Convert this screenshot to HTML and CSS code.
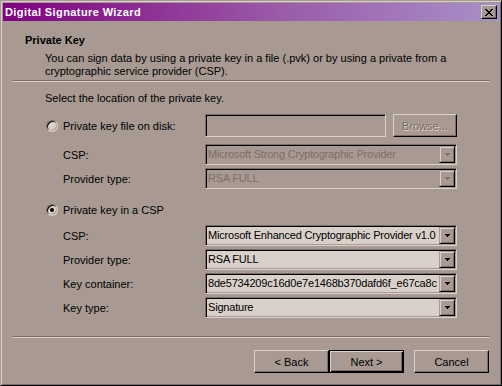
FILE: index.html
```html
<html lang="en">
  <head>
    <meta charset="UTF-8" />
    <title>Digital Signature Wizard</title>
    <link rel="stylesheet" href="styles.css">
  </head>
  <body>
    <div class="window">
      <div class="titlebar">
        <span class="title">Digital Signature Wizard</span>
        <span class="close">
          <svg width="8" height="7" viewBox="0 0 8 7" shape-rendering="crispEdges">
            <path d="M0 0h2v1H0zM6 0h2v1H6zM1 1h2v1H1zM5 1h2v1H5zM2 2h4v1H2zM3 3h2v1H3zM2 4h4v1H2zM1 5h2v1H1zM5 5h2v1H5zM0 6h2v1H0zM6 6h2v1H6z" fill="#000" />
          </svg>
        </span>
      </div>

      <div class="header">
        <h1>Private Key</h1>
        <p>You can sign data by using a private key in a file (.pvk) or by using a private from a cryptographic service provider (CSP).</p>
      </div>
      <div class="sep"></div>

      <div class="main">
        <p class="intro">Select the location of the private key.</p>

        <div class="options">
          <div class="row row-tall">
            <label class="choice"><span class="radio"></span>Private key file on disk:</label>
            <div class="file">
              <div class="edit"></div>
              <div class="btn small disabled">Browse...</div>
            </div>
          </div>
          <div class="row first-sub">
            <span class="label">CSP:</span>
            <div class="combo disabled">
              <span class="value">Microsoft Strong Cryptographic Provider</span>
              <span class="drop"><svg width="5" height="3" viewBox="0 0 5 3" shape-rendering="crispEdges"><path d="M0 0h5v1H0zM1 1h3v1H1zM2 2h1v1H2z" /></svg></span>
            </div>
          </div>
          <div class="row">
            <span class="label">Provider type:</span>
            <div class="combo disabled">
              <span class="value">RSA FULL</span>
              <span class="drop"><svg width="5" height="3" viewBox="0 0 5 3" shape-rendering="crispEdges"><path d="M0 0h5v1H0zM1 1h3v1H1zM2 2h1v1H2z" /></svg></span>
            </div>
          </div>

          <div class="row second">
            <label class="choice"><span class="radio checked"></span>Private key in a CSP</label>
          </div>
          <div class="row second-sub">
            <span class="label">CSP:</span>
            <div class="combo">
              <span class="value">Microsoft Enhanced Cryptographic Provider v1.0</span>
              <span class="drop"><svg width="5" height="3" viewBox="0 0 5 3" shape-rendering="crispEdges"><path d="M0 0h5v1H0zM1 1h3v1H1zM2 2h1v1H2z" /></svg></span>
            </div>
          </div>
          <div class="row">
            <span class="label">Provider type:</span>
            <div class="combo">
              <span class="value">RSA FULL</span>
              <span class="drop"><svg width="5" height="3" viewBox="0 0 5 3" shape-rendering="crispEdges"><path d="M0 0h5v1H0zM1 1h3v1H1zM2 2h1v1H2z" /></svg></span>
            </div>
          </div>
          <div class="row">
            <span class="label">Key container:</span>
            <div class="combo">
              <span class="value">8de5734209c16d0e7e1468b370dafd6f_e67ca8c</span>
              <span class="drop"><svg width="5" height="3" viewBox="0 0 5 3" shape-rendering="crispEdges"><path d="M0 0h5v1H0zM1 1h3v1H1zM2 2h1v1H2z" /></svg></span>
            </div>
          </div>
          <div class="row">
            <span class="label">Key type:</span>
            <div class="combo">
              <span class="value">Signature</span>
              <span class="drop"><svg width="5" height="3" viewBox="0 0 5 3" shape-rendering="crispEdges"><path d="M0 0h5v1H0zM1 1h3v1H1zM2 2h1v1H2z" /></svg></span>
            </div>
          </div>
        </div>
      </div>

      <div class="footer">
        <div class="sep"></div>
        <div class="buttons">
          <button class="btn" type="button">&lt; Back</button>
          <button class="btn default" type="button">Next &gt;</button>
          <button class="btn cancel" type="button">Cancel</button>
        </div>
      </div>
    </div>
  </body>
</html>
```

FILE: styles.css
```css
* {
  box-sizing: border-box;
}

body {
  margin: 0;
  background: #a89a92;
  font-family: "Liberation Sans", Arial, sans-serif;
  font-size: 11px;
  color: #000;
}

.window {
  width: 502px;
  height: 386px;
  display: flex;
  flex-direction: column;
  background: #a89a92;
  border: 1px solid;
  border-color: #a89a92 #000 #000 #a89a92;
  box-shadow: inset 1px 1px #d9d1cb, inset -1px -1px #7c6e67;
  padding: 2px 1px 1px 2px;
}

.titlebar {
  height: 18px;
  flex: none;
  display: flex;
  align-items: center;
  justify-content: space-between;
  padding: 0 3px 0 2px;
  background: linear-gradient(to right, #800080, #9a5aa8 55%, #a890c8);
}

.title {
  color: #fff;
  font-weight: bold;
  letter-spacing: 0.4px;
}

.close {
  width: 16px;
  height: 14px;
  display: flex;
  align-items: center;
  justify-content: center;
  background: #a89a92;
  border: 1px solid;
  border-color: #d9d1cb #000 #000 #d9d1cb;
  box-shadow: inset -1px -1px #7c6e67;
}

.header {
  padding: 13px 0 0 22px;
}

.header h1 {
  margin: 0;
  font-size: 11px;
  font-weight: bold;
  line-height: 13px;
}

.header p {
  margin: 5px 0 0 20px;
  line-height: 13px;
  width: 420px;
}

.sep {
  height: 2px;
  flex: none;
  margin: 2px 10px 0;
  border-top: 1px solid #7c6e67;
  border-bottom: 1px solid #d9d1cb;
}

.main {
  padding-left: 42px;
}

.intro {
  margin: 10px 0 0;
  line-height: 13px;
}

.options {
  margin: 9px 0 0 1px;
}

.row {
  display: grid;
  grid-template-columns: 159px 252px;
  align-items: center;
  height: 21px;
  margin-top: 3px;
}

.row-tall {
  height: 23px;
  margin-top: 0;
}

.first-sub {
  margin-top: 7px;
}

.second {
  margin-top: 10px;
}

.second-sub {
  margin-top: 5px;
}

.choice {
  display: flex;
  align-items: center;
  gap: 5px;
}

.label {
  padding-left: 17px;
}

.radio {
  position: relative;
  width: 12px;
  height: 12px;
  border-radius: 50%;
  background: #d9d1cb;
  border: 1px solid;
  border-color: #7c6e67 #d9d1cb #d9d1cb #7c6e67;
  box-shadow: inset 1px 1px #000, inset -1px -1px #a89a92;
}

.radio.checked::after {
  content: "";
  position: absolute;
  left: 3px;
  top: 3px;
  width: 4px;
  height: 4px;
  border-radius: 50%;
  background: #000;
}

.file {
  display: flex;
  gap: 7px;
  height: 23px;
}

.edit {
  flex: 0 0 181px;
  height: 23px;
  background: #a89a92;
  border: 1px solid;
  border-color: #7c6e67 #d9d1cb #d9d1cb #7c6e67;
  box-shadow: inset 1px 1px #000;
}

.combo {
  height: 21px;
  display: flex;
  padding: 1px;
  background: #d8d0c9;
  border: 1px solid;
  border-color: #7c6e67 #d9d1cb #d9d1cb #7c6e67;
  box-shadow: inset 1px 1px #000, inset -1px -1px #a89a92;
}

.combo .value {
  flex: 1;
  min-width: 0;
  overflow: hidden;
  white-space: nowrap;
  padding-left: 1px;
  line-height: 17px;
  letter-spacing: -0.2px;
}

.combo.disabled {
  background: #a89a92;
  color: #7c6e67;
}

.drop {
  flex: 0 0 16px;
  height: 17px;
  display: flex;
  align-items: center;
  justify-content: center;
  background: #a89a92;
  border: 1px solid;
  border-color: #a89a92 #000 #000 #a89a92;
  box-shadow: inset 1px 1px #d9d1cb, inset -1px -1px #7c6e67;
  fill: #000;
}

.combo.disabled .drop {
  fill: #7c6e67;
}

.btn {
  width: 75px;
  height: 23px;
  display: flex;
  align-items: center;
  justify-content: center;
  padding: 0;
  margin: 0;
  font: inherit;
  color: #000;
  background: #a89a92;
  border: 1px solid;
  border-color: #d9d1cb #000 #000 #d9d1cb;
  box-shadow: inset -1px -1px #7c6e67;
}

.btn.small {
  width: 64px;
}

.btn.disabled {
  color: #7c6e67;
  text-shadow: 1px 1px #d9d1cb;
}

.btn.default {
  border-color: #000;
  box-shadow: inset 1px 1px #d9d1cb, inset -1px -1px #000, inset -2px -2px #7c6e67;
}

.footer {
  margin-top: auto;
  padding-bottom: 11px;
}

.footer .sep {
  margin-top: 0;
}

.buttons {
  display: flex;
  justify-content: flex-end;
  margin: 12px 11px 0 0;
}

.btn.cancel {
  margin-left: 10px;
}
```
